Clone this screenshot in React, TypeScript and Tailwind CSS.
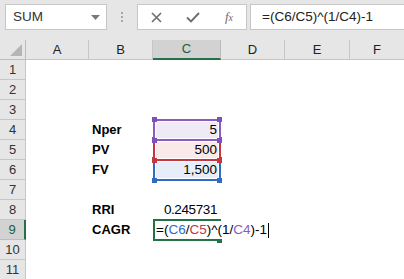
import React from "react";

const cols = ["A", "B", "C", "D", "E", "F"];
const colW = [63, 64, 68, 64, 65, 55];

function Handle({ pos, color }: { pos: string; color: string }) {
  return <div className={`absolute w-[5px] h-[5px] ${pos} ${color} z-30`} />;
}

function RefBox({
  border,
  fill,
  sq,
  z,
}: {
  border: string;
  fill: string;
  sq: string;
  z: string;
}) {
  return (
    <div className={`absolute left-0 right-0 top-[-1px] bottom-[-1px] ${z}`}>
      <div className={`absolute inset-0 border-2 ${border} bg-white p-px`}>
        <div className={`w-full h-full ${fill}`} />
      </div>
      <Handle pos="left-[-1px] top-[-2px]" color={sq} />
      <Handle pos="right-[-1px] top-[-2px]" color={sq} />
      <Handle pos="left-[-1px] bottom-[-2px]" color={sq} />
      <Handle pos="right-[-1px] bottom-[-2px]" color={sq} />
    </div>
  );
}

export default function App() {
  const rows = Array.from({ length: 11 }, (_, i) => i + 1);
  const font = { fontFamily: '"Liberation Sans", Arial, sans-serif' };

  const labels: Record<number, string> = { 4: "Nper", 5: "PV", 6: "FV", 8: "RRI", 9: "CAGR" };
  const values: Record<number, string> = { 4: "5", 5: "500", 6: "1,500", 8: "0.245731" };

  return (
    <div className="w-[404px] h-[279px] overflow-hidden bg-white text-[#222]" style={font}>
      {/* Formula bar */}
      <div className="h-[40px] bg-[#e6e6e6] flex items-start pt-[4px]">
        <div className="ml-[5px] w-[102px] h-[26px] bg-white border border-[#c6c6c6] flex items-center justify-between pl-[7px] pr-[6px]">
          <span className="text-[13.5px] text-[#333]">SUM</span>
          <svg width="9" height="5" viewBox="0 0 9 5">
            <path d="M0 0 L9 0 L4.5 5 Z" fill="#7a7a7a" />
          </svg>
        </div>
        <div className="w-[30px] h-[26px] flex flex-col items-center justify-center gap-[2px]">
          <div className="w-[2px] h-[2px] bg-[#a8a8a8]" />
          <div className="w-[2px] h-[2px] bg-[#a8a8a8]" />
          <div className="w-[2px] h-[2px] bg-[#a8a8a8]" />
        </div>
        <div className="w-[110px] h-[26px] bg-white border border-[#c6c6c6] flex items-center">
          <div className="w-[36px] flex justify-center">
            <svg width="11" height="11" viewBox="0 0 11 11">
              <path d="M1 1 L10 10 M10 1 L1 10" stroke="#6e6e6e" strokeWidth="1.6" />
            </svg>
          </div>
          <div className="w-[38px] flex justify-center">
            <svg width="14" height="11" viewBox="0 0 14 11">
              <path d="M1 5.5 L5 9.5 L13 1" stroke="#6e6e6e" strokeWidth="1.9" fill="none" />
            </svg>
          </div>
          <div className="flex-1 flex justify-center">
            <span className="text-[13px] italic text-[#6e6e6e]" style={{ fontFamily: '"Liberation Serif", serif' }}>
              f<span className="text-[10px]">x</span>
            </span>
          </div>
        </div>
        <div className="ml-[3px] flex-1 h-[26px] bg-white border border-[#c6c6c6] border-r-0 flex items-center pl-[11px]">
          <span className="text-[13.5px] text-[#222]">=(C6/C5)^(1/C4)-1</span>
        </div>
      </div>

      {/* Grid */}
      <div
        className="grid"
        style={{
          gridTemplateColumns: `26px ${colW.map((w) => w + "px").join(" ")}`,
          gridTemplateRows: `20px repeat(11, 20px)`,
        }}
      >
        {/* corner */}
        <div className="bg-[#e6e6e6] border-r border-b border-[#bcbcbc] relative">
          <svg className="absolute right-[3px] bottom-[3px]" width="12" height="12" viewBox="0 0 12 12">
            <path d="M12 0 L12 12 L0 12 Z" fill="#b5b5b5" />
          </svg>
        </div>
        {cols.map((c) =>
          c === "C" ? (
            <div
              key={c}
              className="bg-[#d2d2d2] border-r border-[#bcbcbc] border-b-2 border-b-[#217346] flex items-center justify-center text-[13px] text-[#1e5d39]"
            >
              {c}
            </div>
          ) : (
            <div
              key={c}
              className="bg-[#e6e6e6] border-r border-b border-[#c6c6c6] flex items-center justify-center text-[13px] text-[#222]"
            >
              {c}
            </div>
          )
        )}

        {rows.map((r) => (
          <React.Fragment key={r}>
            {r === 9 ? (
              <div className="bg-[#d2d2d2] border-r-2 border-r-[#217346] border-b border-b-[#bcbcbc] flex items-center justify-center text-[13px] text-[#1e5d39]">
                {r}
              </div>
            ) : (
              <div className="bg-[#e6e6e6] border-r border-b border-[#c6c6c6] flex items-center justify-center text-[13px] text-[#333]">
                {r}
              </div>
            )}
            {/* A */}
            <div />
            {/* B */}
            <div className="flex items-center pl-[3px] text-[13px] font-bold text-black">{labels[r] ?? ""}</div>
            {/* C */}
            <div className="relative flex items-center justify-end pr-[4px] text-[13.5px] text-black">
              {r === 4 && <RefBox border="border-[#8a5cc0]" fill="bg-[#efebf6]" sq="bg-[#7f4fbd]" z="z-20" />}
              {r === 5 && <RefBox border="border-[#c4373f]" fill="bg-[#fae9e9]" sq="bg-[#c4373f]" z="z-10" />}
              {r === 6 && <RefBox border="border-[#2f6bc5]" fill="bg-[#e7eef9]" sq="bg-[#2f6bc5]" z="z-0" />}
              {values[r] && (
                <span className={`relative z-30 ${r === 8 ? "tracking-[-0.4px]" : ""}`}>{values[r]}</span>
              )}
              {r === 9 && (
                <>
                  <div className="absolute left-0 right-0 top-[-1px] bottom-[-1px] border-2 border-[#217346] z-10" />
                  <div className="absolute right-[-1px] bottom-[-3px] w-[5px] h-[5px] bg-[#217346] z-20" />
                  <span className="absolute left-[2px] top-[1px] bottom-[1px] pl-px pr-[2px] bg-white flex items-center whitespace-nowrap z-30">
                    =(<span className="text-[#2f6bc5]">C6</span>/<span className="text-[#c4373f]">C5</span>)^(1/
                    <span className="text-[#8a5cc0]">C4</span>)-1
                    <span className="inline-block w-px h-[15px] bg-black ml-[1px]" />
                  </span>
                </>
              )}
            </div>
            <div />
            <div />
            <div />
          </React.Fragment>
        ))}
      </div>
    </div>
  );
}
